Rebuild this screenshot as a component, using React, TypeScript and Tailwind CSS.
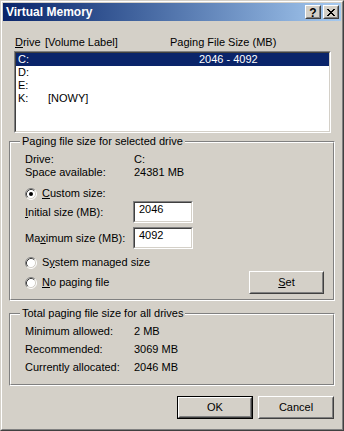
import React from "react";

function Radio({ checked }: { checked?: boolean }) {
  return (
    <svg width="12" height="12" viewBox="0 0 12 12" className="shrink-0">
      <circle cx="6" cy="6" r="5" fill="#ffffff" />
      <path d="M2.11 9.89 A5.5 5.5 0 0 1 9.89 2.11" fill="none" stroke="#808080" />
      <path d="M9.89 2.11 A5.5 5.5 0 0 1 2.11 9.89" fill="none" stroke="#ffffff" />
      <path d="M2.82 9.18 A4.5 4.5 0 0 1 9.18 2.82" fill="none" stroke="#404040" />
      <path d="M9.18 2.82 A4.5 4.5 0 0 1 2.82 9.18" fill="none" stroke="#D4D0C8" />
      {checked && <circle cx="6" cy="6" r="2" fill="#000000" />}
    </svg>
  );
}

function Sunken({ className, children }: { className?: string; children?: React.ReactNode }) {
  return (
    <div className={`border border-t-[#808080] border-l-[#808080] border-r-white border-b-white ${className ?? ""}`}>
      <div className="h-full border border-t-[#404040] border-l-[#404040] border-r-[#D4D0C8] border-b-[#D4D0C8] bg-white">
        {children}
      </div>
    </div>
  );
}

function Btn({ children, className, def }: { children?: React.ReactNode; className?: string; def?: boolean }) {
  if (def) {
    return (
      <div className={`border border-black ${className ?? ""}`}>
        <div className="h-full border border-t-white border-l-white border-r-[#404040] border-b-[#404040]">
          <div className="h-full flex items-center justify-center border border-t-[#D4D0C8] border-l-[#D4D0C8] border-r-[#808080] border-b-[#808080]">
            {children}
          </div>
        </div>
      </div>
    );
  }
  return (
    <div className={`border border-t-white border-l-white border-r-[#404040] border-b-[#404040] ${className ?? ""}`}>
      <div className="h-full flex items-center justify-center border border-t-[#D4D0C8] border-l-[#D4D0C8] border-r-[#808080] border-b-[#808080]">
        {children}
      </div>
    </div>
  );
}

function CapBtn({ children, className }: { children?: React.ReactNode; className?: string }) {
  return (
    <div className={`w-[16px] h-[14px] bg-[#D4D0C8] border border-t-white border-l-white border-r-[#404040] border-b-[#404040] ${className ?? ""}`}>
      <div className="h-full flex items-center justify-center border border-t-[#D4D0C8] border-l-[#D4D0C8] border-r-[#808080] border-b-[#808080]">
        {children}
      </div>
    </div>
  );
}

function Group({ title, className, children }: { title: string; className?: string; children?: React.ReactNode }) {
  return (
    <div className={`relative border border-t-[#808080] border-l-[#808080] border-r-white border-b-white ${className ?? ""}`}>
      <div className="h-full border border-t-white border-l-white border-r-[#808080] border-b-[#808080] flex flex-col">
        {children}
      </div>
      <span className="absolute left-[10px] top-[-7px] px-[2px] bg-[#D4D0C8] leading-[13px] whitespace-nowrap">
        {title}
      </span>
    </div>
  );
}

function CloseGlyph() {
  const px: [number, number][] = [
    [0, 0], [1, 0], [6, 0], [7, 0],
    [1, 1], [2, 1], [5, 1], [6, 1],
    [2, 2], [3, 2], [4, 2], [5, 2],
    [3, 3], [4, 3],
    [2, 4], [3, 4], [4, 4], [5, 4],
    [1, 5], [2, 5], [5, 5], [6, 5],
    [0, 6], [1, 6], [6, 6], [7, 6],
  ];
  return (
    <svg width="8" height="7" viewBox="0 0 8 7" shapeRendering="crispEdges">
      {px.map(([x, y], i) => (
        <rect key={i} x={x} y={y} width="1" height="1" fill="#000" />
      ))}
    </svg>
  );
}

export default function App() {
  return (
    <div className="w-[344px] h-[431px] bg-[#D4D0C8] border border-t-[#D4D0C8] border-l-[#D4D0C8] border-r-[#404040] border-b-[#404040] font-['Liberation_Sans',Arial,sans-serif] text-[11px] leading-[13px] text-black">
      <div className="h-full border border-t-white border-l-white border-r-[#808080] border-b-[#808080] p-px flex flex-col">
        {/* Title bar */}
        <div className="h-[18px] shrink-0 flex items-center bg-linear-to-r from-[#0A246A] to-[#A6CAF0] pl-[3px] pr-[2px]">
          <span className="flex-1 text-white font-bold text-[12px] leading-[18px] whitespace-nowrap">Virtual Memory</span>
          <CapBtn>
            <span className="font-bold text-[12px] leading-[12px] mt-px">?</span>
          </CapBtn>
          <CapBtn className="ml-[2px]">
            <CloseGlyph />
          </CapBtn>
        </div>

        {/* Client */}
        <div className="flex flex-col">
          {/* List header */}
          <div className="mt-[15px] h-[13px] flex pl-[12px] whitespace-nowrap">
            <span className="w-[30px]">
              <span className="underline underline-offset-1">D</span>rive
            </span>
            <span className="w-[125px]">[Volume Label]</span>
            <span>Paging File Size (MB)</span>
          </div>

          {/* List box */}
          <Sunken className="mt-[2px] ml-[11px] w-[317px] h-[82px]">
            <div className="flex flex-col whitespace-nowrap">
              <div className="h-[13px] flex pl-[2px] bg-[#0A246A] text-white">
                <span className="w-[30px]">C:</span>
                <span className="w-[151px]"></span>
                <span>2046 - 4092</span>
              </div>
              <div className="h-[13px] flex pl-[2px]">
                <span className="w-[30px]">D:</span>
              </div>
              <div className="h-[13px] flex pl-[2px]">
                <span className="w-[30px]">E:</span>
              </div>
              <div className="h-[13px] flex pl-[2px]">
                <span className="w-[30px]">K:</span>
                <span className="w-[151px]">[NOWY]</span>
              </div>
            </div>
          </Sunken>

          {/* Group 1 */}
          <Group title="Paging file size for selected drive" className="mt-[8px] ml-[6px] w-[326px] h-[160px]">
            <div className="mt-[10px] h-[13px] flex pl-[14px]">
              <span className="w-[109px]">Drive:</span>
              <span>C:</span>
            </div>
            <div className="h-[13px] flex pl-[14px]">
              <span className="w-[109px]">Space available:</span>
              <span>24381 MB</span>
            </div>
            <div className="mt-[8px] h-[13px] flex items-center pl-[14px] gap-[5px]">
              <Radio checked />
              <span>
                <span className="underline underline-offset-1">C</span>ustom size:
              </span>
            </div>
            <div className="mt-[1px] h-[22px] flex items-center pl-[14px]">
              <span className="w-[108px]">
                <span className="underline underline-offset-1">I</span>nitial size (MB):
              </span>
              <Sunken className="w-[60px] h-[22px]">
                <div className="pl-[4px] leading-[13px]">2046</div>
              </Sunken>
            </div>
            <div className="mt-[4px] h-[22px] flex items-center pl-[14px]">
              <span className="w-[108px]">
                Ma<span className="underline underline-offset-1">x</span>imum size (MB):
              </span>
              <Sunken className="w-[60px] h-[22px]">
                <div className="pl-[4px] leading-[13px]">4092</div>
              </Sunken>
            </div>
            <div className="mt-[7px] h-[13px] flex items-center pl-[14px] gap-[5px]">
              <Radio />
              <span>
                S<span className="underline underline-offset-1">y</span>stem managed size
              </span>
            </div>
            <div className="mt-[2px] h-[23px] flex items-center pl-[14px]">
              <Radio />
              <span className="ml-[5px]">
                <span className="underline underline-offset-1">N</span>o paging file
              </span>
              <Btn className="ml-auto mr-[9px] w-[75px] h-[23px]">
                <span>
                  <span className="underline underline-offset-1">S</span>et
                </span>
              </Btn>
            </div>
          </Group>

          {/* Group 2 */}
          <Group title="Total paging file size for all drives" className="mt-[12px] ml-[6px] w-[326px] h-[73px]">
            <div className="mt-[10px] h-[13px] flex pl-[14px]">
              <span className="w-[109px]">Minimum allowed:</span>
              <span>2 MB</span>
            </div>
            <div className="mt-[5px] h-[13px] flex pl-[14px]">
              <span className="w-[109px]">Recommended:</span>
              <span>3069 MB</span>
            </div>
            <div className="mt-[5px] h-[13px] flex pl-[14px]">
              <span className="w-[109px]">Currently allocated:</span>
              <span>2046 MB</span>
            </div>
          </Group>

          {/* Buttons */}
          <div className="mt-[10px] h-[23px] flex">
            <Btn def className="ml-[174px] w-[76px] h-[23px]">OK</Btn>
            <Btn className="ml-[5px] w-[76px] h-[23px]">Cancel</Btn>
          </div>
        </div>
      </div>
    </div>
  );
}
